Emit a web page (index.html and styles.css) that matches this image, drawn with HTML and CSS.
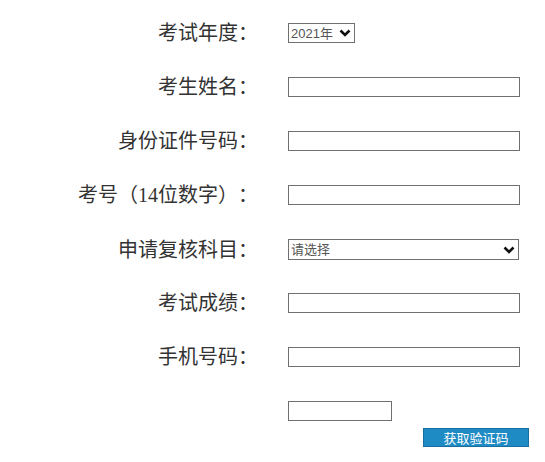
FILE: index.html
```html
<!DOCTYPE html>
<html lang="zh">
<head>
<meta charset="utf-8">
<link rel="stylesheet" href="styles.css">
</head>
<body>
<form class="form">
  <div class="row">
    <label class="label">考试年度：</label>
    <div class="field">
      <div class="select-wrap year">
        <select class="select"><option>2021年</option></select>
        <svg class="chev" width="12" height="8" viewBox="0 0 12 8"><path d="M1.5 1.5 L6 6 L10.5 1.5" fill="none" stroke="#111" stroke-width="2.6"/></svg>
      </div>
    </div>
  </div>
  <div class="row">
    <label class="label">考生姓名：</label>
    <div class="field"><input class="input" type="text"></div>
  </div>
  <div class="row">
    <label class="label">身份证件号码：</label>
    <div class="field"><input class="input" type="text"></div>
  </div>
  <div class="row">
    <label class="label">考号（14位数字）：</label>
    <div class="field"><input class="input" type="text"></div>
  </div>
  <div class="row">
    <label class="label">申请复核科目：</label>
    <div class="field">
      <div class="select-wrap subject">
        <select class="select"><option>请选择</option></select>
        <svg class="chev" width="12" height="8" viewBox="0 0 12 8"><path d="M1.5 1.5 L6 6 L10.5 1.5" fill="none" stroke="#111" stroke-width="2.6"/></svg>
      </div>
    </div>
  </div>
  <div class="row">
    <label class="label">考试成绩：</label>
    <div class="field"><input class="input" type="text"></div>
  </div>
  <div class="row">
    <label class="label">手机号码：</label>
    <div class="field"><input class="input" type="text"></div>
  </div>
  <div class="group">
    <div class="row">
      <span class="label"></span>
      <div class="field"><input class="input code" type="text"></div>
    </div>
    <div class="btn-row">
      <div class="btn">获取验证码</div>
    </div>
  </div>
</form>
</body>
</html>
```
FILE: styles.css
```css
html, body { margin: 0; padding: 0; background: #fff; }
body { padding: 23px 0 0 0; }
.form {
  display: flex;
  flex-direction: column;
  gap: 34px;
}
.group {
  display: flex;
  flex-direction: column;
  gap: 7px;
}
.row {
  display: grid;
  grid-template-columns: 258px 1fr;
  column-gap: 30px;
  align-items: center;
  height: 20px;
}
.label {
  text-align: right;
  font-family: "Liberation Serif", "Noto Sans CJK SC", serif;
  font-size: 20px;
  line-height: 20px;
  color: #333;
  white-space: nowrap;
  text-spacing-trim: space-all;
}
.field { display: flex; align-items: center; }
.input {
  box-sizing: border-box;
  width: 232px;
  height: 20px;
  border: 1px solid #707070;
  margin: 0;
  padding: 0 3px;
  background: #fff;
  outline: none;
}
.select-wrap { position: relative; height: 20px; }
.select {
  appearance: none;
  -webkit-appearance: none;
  box-sizing: border-box;
  width: 100%;
  height: 20px;
  border: 1px solid #707070;
  border-radius: 0;
  background: #fff;
  margin: 0;
  padding: 0 0 0 2px;
  font-family: "Liberation Sans", "Noto Sans CJK SC", sans-serif;
  font-size: 13px;
  color: #555;
}
.year { width: 67px; }
.subject { width: 231px; height: 21px; }
.subject .select { height: 21px; }
.chev { position: absolute; right: 4px; top: 6px; }
.subject .chev { right: 4px; top: 7px; }
.code { width: 104px; }
.btn-row {
  display: flex;
  padding-left: 423px;
}
.btn {
  box-sizing: border-box;
  width: 106px;
  height: 19px;
  background: #1f8bc4;
  border: 1px solid #186fa0;
  color: #fff;
  font-family: "Noto Sans CJK SC", sans-serif;
  font-size: 13px;
  line-height: 17px;
  text-align: center;
}
```
